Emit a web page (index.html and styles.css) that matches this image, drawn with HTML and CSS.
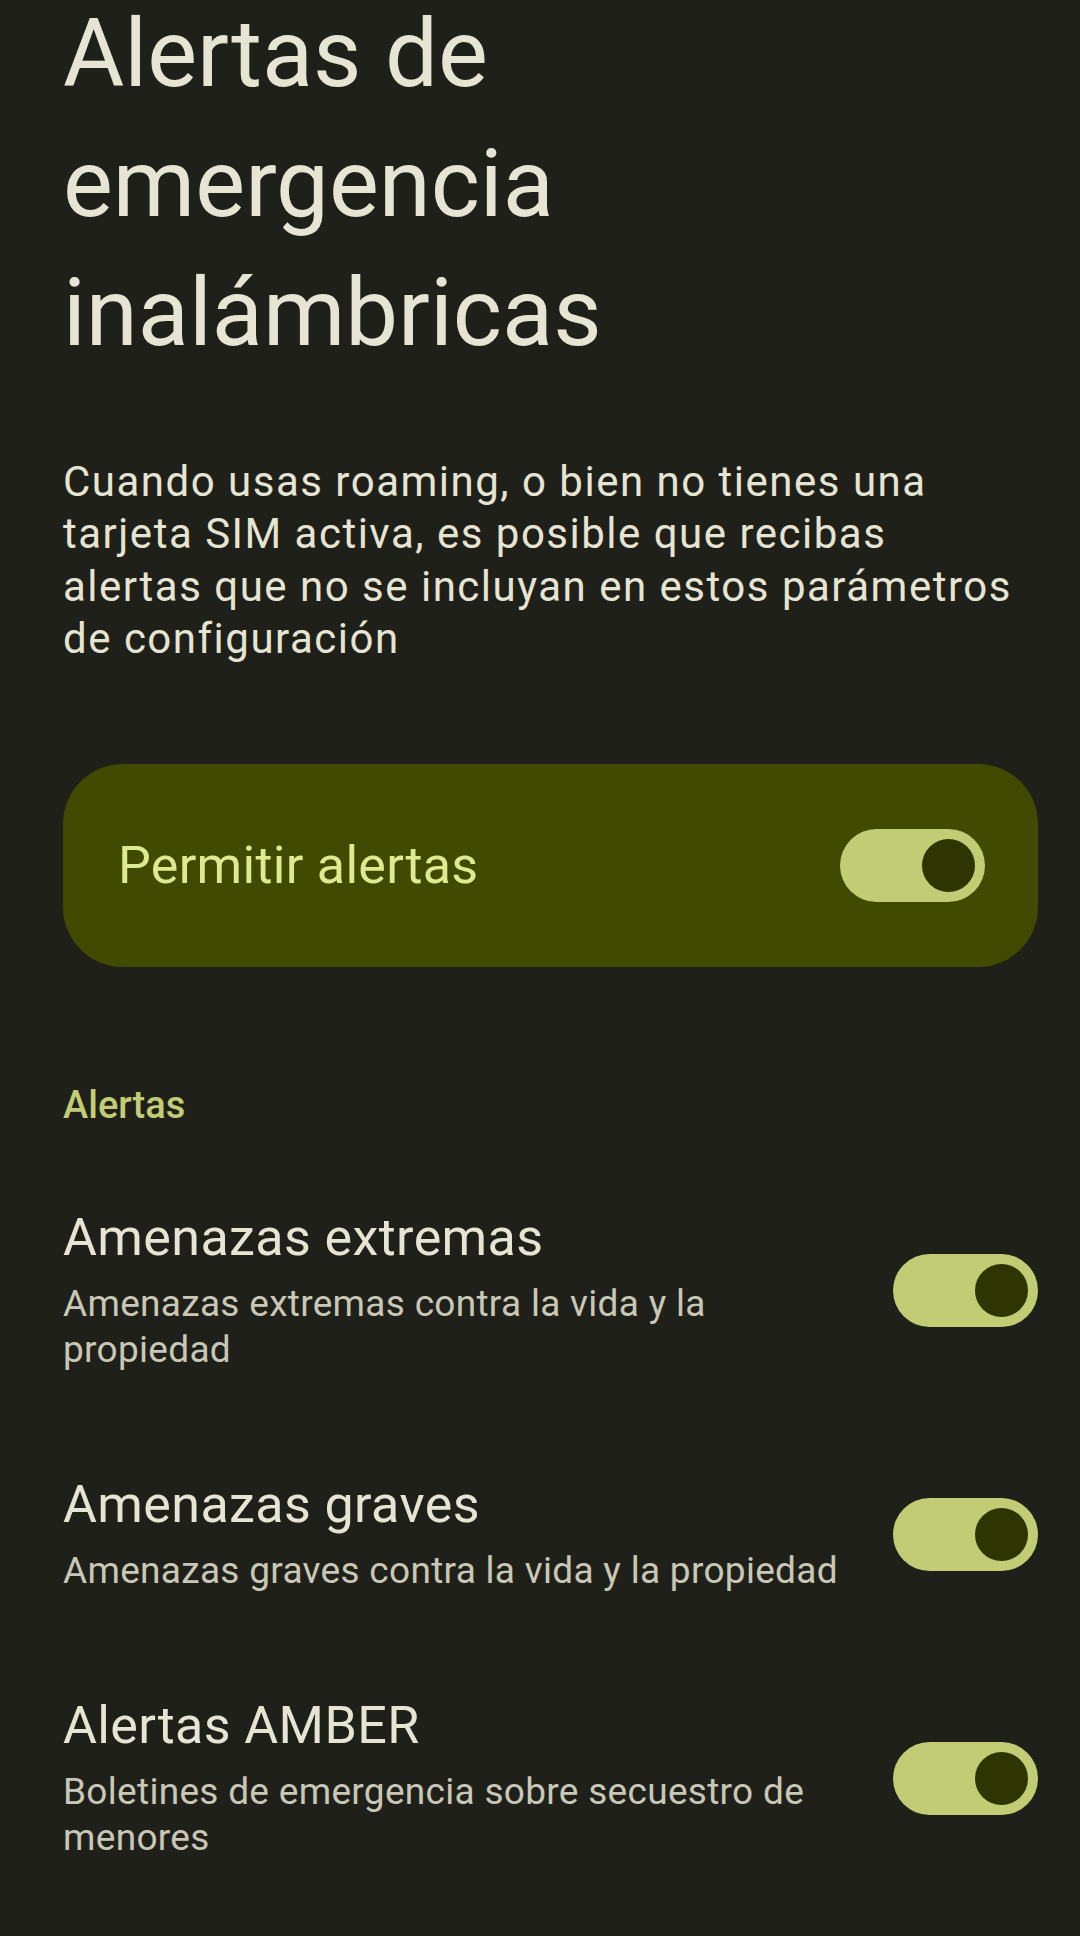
FILE: index.html
```html
<!DOCTYPE html>
<html lang="es">
<head>
  <meta charset="UTF-8" />
  <meta name="viewport" content="width=device-width, initial-scale=1.0" />
  <title>Alertas de emergencia inalámbricas</title>
  <link rel="stylesheet" href="styles.css">
</head>
<body>

  <h1 class="page-title">Alertas de emergencia inalámbricas</h1>

  <p class="intro">
    Cuando usas roaming, o bien no tienes una<br>
    tarjeta SIM activa, es posible que recibas<br>
    alertas que no se incluyan en estos parámetros<br>
    de configuración
  </p>

  <div class="main-switch">
    <span class="main-label">Permitir alertas</span>
    <span class="toggle on"><span class="thumb"></span></span>
  </div>

  <h3 class="section-header">Alertas</h3>

  <div class="pref">
    <div class="pref-text">
      <div class="pref-title">Amenazas extremas</div>
      <div class="pref-summary">Amenazas extremas contra la vida y la propiedad</div>
    </div>
    <span class="toggle on"><span class="thumb"></span></span>
  </div>

  <div class="pref">
    <div class="pref-text">
      <div class="pref-title">Amenazas graves</div>
      <div class="pref-summary">Amenazas graves contra la vida y la propiedad</div>
    </div>
    <span class="toggle on"><span class="thumb"></span></span>
  </div>

  <div class="pref">
    <div class="pref-text">
      <div class="pref-title">Alertas AMBER</div>
      <div class="pref-summary">Boletines de emergencia sobre secuestro de menores</div>
    </div>
    <span class="toggle on"><span class="thumb"></span></span>
  </div>

</body>
</html>
```

FILE: styles.css
```css
body {
  margin: 0;
  padding: 0 42px 0 63px;
  background: #20201a;
  color: #e6e4d2;
  font-family: Roboto, "Noto Sans", sans-serif;
  overflow: hidden;
}

.page-title {
  margin: -10px 0 0 0;
  padding-right: 60px;
  font-size: 94px;
  font-weight: 400;
  line-height: 129.5px;
  color: #e6e4d2;
}

.intro {
  margin: 77px 0 0 0;
  font-size: 42px;
  line-height: 52.5px;
  letter-spacing: 1.5px;
  white-space: nowrap;
  color: #e6e4d2;
}

.main-switch {
  display: flex;
  align-items: center;
  justify-content: space-between;
  height: 203px;
  margin-top: 98px;
  padding: 0 53px 0 55px;
  border-radius: 60px;
  background: #404a00;
  box-sizing: border-box;
}

.main-label {
  font-size: 52px;
  letter-spacing: 0.3px;
  color: #dfe98f;
}

.toggle {
  display: flex;
  align-items: center;
  justify-content: flex-end;
  flex-shrink: 0;
  width: 145px;
  height: 73px;
  padding: 0 10px;
  border-radius: 37px;
  background: #c2cc74;
  box-sizing: border-box;
}

.thumb {
  width: 53px;
  height: 53px;
  border-radius: 50%;
  background: #2f3500;
}

.section-header {
  margin: 0;
  padding: 112px 0 26px 0;
  font-size: 38px;
  font-weight: 500;
  line-height: 52px;
  color: #c2cc74;
}

.pref {
  display: flex;
  align-items: center;
  justify-content: space-between;
  gap: 40px;
  padding: 51px 0;
}

.pref-title {
  font-size: 52px;
  line-height: 60px;
  letter-spacing: 0.4px;
  color: #e6e4d2;
}

.pref-summary {
  margin-top: 13px;
  font-size: 37px;
  line-height: 46px;
  letter-spacing: 0.3px;
  color: #c9c8b6;
}
```
